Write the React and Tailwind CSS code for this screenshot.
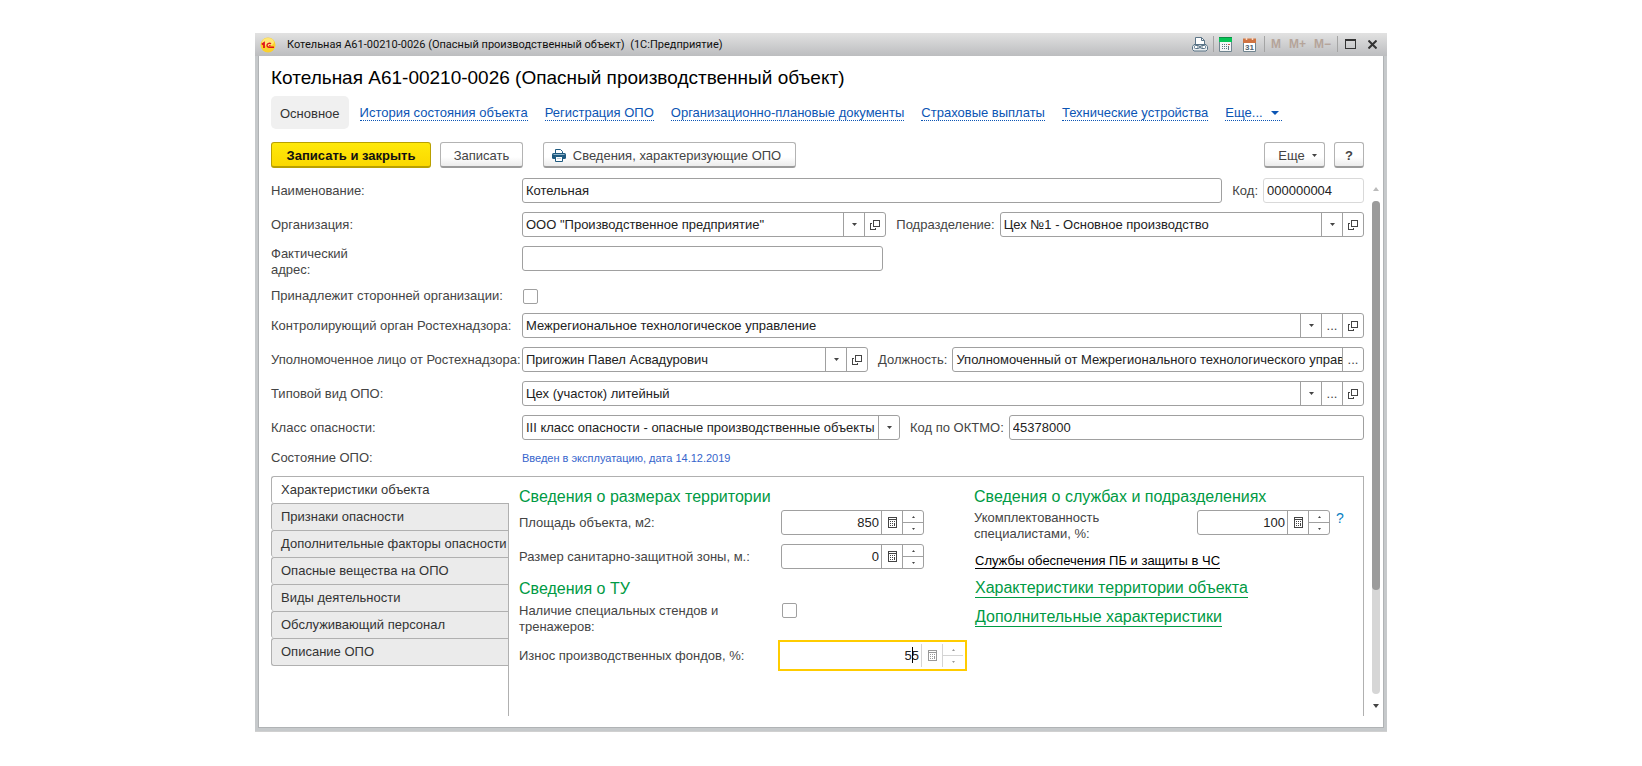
import { useState } from 'react';
import clsx from 'clsx';

const links = [
  'История состояния объекта',
  'Регистрация ОПО',
  'Организационно-плановые документы',
  'Страховые выплаты',
  'Технические устройства',
];

const tabs = [
  'Характеристики объекта',
  'Признаки опасности',
  'Дополнительные факторы опасности',
  'Опасные вещества на ОПО',
  'Виды деятельности',
  'Обслуживающий персонал',
  'Описание ОПО',
];

const Arrow = ({ className = 'w-[5px] h-[3px]', up }) => (
  <svg viewBox="0 0 6 3" className={className} preserveAspectRatio="none" aria-hidden="true">
    <path d={up ? 'M0 3h6L3 0z' : 'M0 0h6L3 3z'} fill="currentColor" />
  </svg>
);

const OpenIcon = () => (
  <svg width="10" height="10" viewBox="0 0 10 10" fill="none" stroke="currentColor" shapeRendering="crispEdges" aria-hidden="true">
    <path d="M3.5 0.5h6v6h-6z M2 3.5H0.5v6h5V8" />
  </svg>
);

const CalcIcon = () => (
  <svg width="9" height="11" viewBox="0 0 9 11" fill="none" stroke="currentColor" shapeRendering="crispEdges" aria-hidden="true">
    <path d="M0.5 0.5h8v10h-8z M0 2.5h9" />
    <path d="M2 4.5h5M2 6.5h5M2 8.5h3" strokeDasharray="1 1" />
    <path d="M6.5 6v3" />
  </svg>
);

const PrinterIcon = () => (
  <svg width="14" height="13" viewBox="0 0 14 13" fill="none" aria-hidden="true">
    <path d="M3.5 4V0.5h5l2 2V4" fill="#fff" stroke="#1f5a80" />
    <rect y="4" width="14" height="6" rx="1.5" fill="#1f5a80" />
    <path d="M1.5 5.5h11" stroke="#8fb4cb" />
    <path d="M3.5 7.5h7v5h-7z" fill="#fff" stroke="#1f5a80" />
    <path d="M5 9.5h4" stroke="#bcd0dc" />
  </svg>
);

const LogoIcon = () => (
  <svg width="16" height="16" viewBox="0 0 16 16" fill="none" aria-hidden="true">
    <circle cx="8" cy="8" r="7.5" fill="#fbd12c" />
    <ellipse cx="8" cy="5" rx="6" ry="4" fill="#ffe778" />
    <path d="M1.8 7.4L4 5.9v5" stroke="#e0131b" strokeWidth="1.8" />
    <path d="M11 6.8A2.4 2 0 1 0 9.2 10.3H14" stroke="#e0131b" strokeWidth="1.4" />
    <path d="M9.2 8.5H10.5" stroke="#e0131b" />
  </svg>
);

const TitlePrinterIcon = () => (
  <svg width="16" height="15" viewBox="0 0 16 15" fill="none" stroke="#5b7487" aria-hidden="true">
    <path d="M3.5 7V0.5h6l3 3V7" fill="#fff" />
    <path d="M9.5 0.5v3h3" />
    <path d="M2 7.5h12l1.5 2v3l-1.5 1.5H2L0.5 12.5v-3z" fill="#e9edf0" />
    <rect x="2.5" y="8.5" width="5" height="3" rx="1" fill="#fff" />
    <rect x="8.5" y="8.5" width="5" height="3" rx="1" fill="#fff" />
    <path d="M5 10h6" />
  </svg>
);

const TitleCalcIcon = () => (
  <svg width="13" height="15" viewBox="0 0 13 15" fill="none" aria-hidden="true">
    <path d="M0.5 0.5h12v14h-12z" fill="#f4f6f7" stroke="#70848f" />
    <path d="M0 0h13v5H0z" fill="#05c455" />
    <path d="M0 0.5h13" stroke="#0a8f43" />
    <path d="M3 7.5h5M3 9.5h5M3 11.5h5" stroke="#5d7482" strokeDasharray="1 1" />
    <path d="M9 7.5h2" stroke="#d05a4a" />
    <path d="M9.5 9v4" stroke="#5d7482" />
  </svg>
);

const TitleCalendarIcon = () => (
  <svg width="13" height="15" viewBox="0 0 13 15" fill="none" aria-hidden="true">
    <path d="M0.5 2.5h12v12h-12z" fill="#fff" stroke="#70848f" />
    <path d="M0 1.5h13V6H0z" fill="#cf7442" />
    <path d="M3.5 0v3M9.5 0v3" stroke="#f7d9c6" strokeWidth="1.5" />
    <text x="6.5" y="13" textAnchor="middle" fontSize="8" fontWeight="bold" fontFamily="Liberation Sans, sans-serif" fill="#4d5f6c">31</text>
  </svg>
);

const sideButton = 'flex w-[21px] shrink-0 items-center justify-center border-l border-[#a0a0a0]';
const titleDivider = 'h-4 w-px bg-[#a4a4a4]';
const toolButton = 'flex h-[26px] items-center justify-center rounded-[3px] border border-[#b3b3b3] border-b-2 border-b-[#9b9b9b] bg-linear-to-b from-white from-60% to-[#ececec] pt-[2px] text-[#444]';

const Field = ({ id, value, buttons = [], className, muted }) => (
  <div
    className={clsx(
      'flex h-[25px] min-w-0 overflow-hidden rounded-[3px] border bg-white',
      muted ? 'border-[#d9d9d9]' : 'border-[#a0a0a0]',
      className,
    )}
  >
    <input id={id} defaultValue={value} className="min-w-0 flex-1 pl-[3px] text-[#222] outline-none" />
    {buttons.includes('list') && (
      <button aria-label="Выбрать из списка" className={sideButton}><Arrow /></button>
    )}
    {buttons.includes('more') && (
      <button aria-label="Показать все" className={sideButton}>...</button>
    )}
    {buttons.includes('open') && (
      <button aria-label="Открыть" className={sideButton}><OpenIcon /></button>
    )}
  </div>
);

const NumberField = ({ id, value, className }) => (
  <div className={clsx('flex h-[25px] shrink-0 overflow-hidden rounded-[3px] border border-[#a0a0a0]', className)}>
    <input id={id} inputMode="numeric" defaultValue={value} className="min-w-0 flex-1 pr-[2px] text-right text-[#222] outline-none" />
    <button aria-label="Калькулятор" className={sideButton}><CalcIcon /></button>
    <div className="flex w-[21px] shrink-0 flex-col border-l border-[#a0a0a0]">
      <button aria-label="Увеличить" className="flex flex-1 items-center justify-center"><Arrow up className="h-[2px] w-[3px]" /></button>
      <button aria-label="Уменьшить" className="flex flex-1 items-center justify-center border-t border-[#a0a0a0]"><Arrow className="h-[2px] w-[3px]" /></button>
    </div>
  </div>
);

const Row = ({ id, label, children }) => (
  <div className="flex items-center">
    <label htmlFor={id} className="w-[251px] shrink-0 whitespace-nowrap">{label}</label>
    {children}
  </div>
);

const SideLabel = ({ id, children }) => (
  <label htmlFor={id} className="shrink-0 pr-[5px] pl-[10px] whitespace-nowrap">{children}</label>
);

const TitleBar = () => (
  <header className="flex h-[23px] items-center bg-linear-to-b from-[#e2e2e2] to-[#bcbdbf] pr-[10px] pl-[5px] text-[#111]">
    <LogoIcon />
    <span className="ml-[11px] flex-1 font-['Roboto',sans-serif] text-[11px] whitespace-pre">
      {'Котельная А61-00210-0026 (Опасный производственный объект)  (1С:Предприятие)'}
    </span>
    <div className="flex items-center pb-px">
      <button aria-label="Печать"><TitlePrinterIcon /></button>
      <span className={clsx(titleDivider, 'mx-[5px]')} />
      <button aria-label="Калькулятор"><TitleCalcIcon /></button>
      <button aria-label="Календарь" className="ml-[11px]"><TitleCalendarIcon /></button>
      <span className={clsx(titleDivider, 'ml-2')} />
      <div className="flex gap-2 px-[6px] text-[12px] font-bold text-[#b5a49a]">
        <button>M</button>
        <button>M+</button>
        <button>M−</button>
      </div>
      <span className={titleDivider} />
      <button aria-label="Развернуть" className="ml-[7px] h-[10px] w-[11px] border border-t-2 border-[#333]" />
      <button aria-label="Закрыть" className="ml-3">
        <svg width="9" height="9" viewBox="0 0 9 9" stroke="#333" strokeWidth="2" aria-hidden="true">
          <path d="M0.5 0.5l8 8M8.5 0.5l-8 8" />
        </svg>
      </button>
    </div>
  </header>
);

const NavBar = () => (
  <nav className="mt-[7px] flex h-[33px] items-center">
    <span className="flex h-full items-center rounded-[5px] bg-[#f0f0f0] px-[9px] pt-[2px] text-[#333]">Основное</span>
    <div className="ml-[11px] flex gap-[17px] pt-[2px] text-[#0b55b4]">
      {links.map((link) => (
        <a key={link} href="#" className="border-b border-dotted border-[#0b55b4] leading-[14px] whitespace-nowrap">{link}</a>
      ))}
      <a href="#" className="flex items-center gap-2 border-b border-dotted border-[#0b55b4] pr-[3px] leading-[14px]">
        Еще...
        <Arrow className="h-[4px] w-[8px]" />
      </a>
    </div>
  </nav>
);

const Toolbar = () => (
  <div className="mt-[13px] flex">
    <button className="h-[26px] w-[160px] rounded-[3px] border border-b-2 border-[#b9a000] bg-linear-to-b from-[#ffe90a] to-[#fbd800] pt-[2px] font-bold text-[#111]">
      Записать и закрыть
    </button>
    <button className={clsx(toolButton, 'ml-[9px] w-[83px]')}>Записать</button>
    <button className={clsx(toolButton, 'ml-5 w-[253px] gap-[7px] pr-[6px]')}>
      <PrinterIcon />
      Сведения, характеризующие ОПО
    </button>
    <button className={clsx(toolButton, 'ml-auto w-[61px] gap-[7px] pl-[6px]')}>
      Еще
      <Arrow />
    </button>
    <button className={clsx(toolButton, 'ml-[9px] w-[30px] font-bold')}>?</button>
  </div>
);

const sectionTitle = 'text-[16px] leading-5 text-[#009a44]';
const sectionLink = 'border-b border-[#009a44] text-[16px] leading-[18px] text-[#009a44]';
const checkbox = 'h-[15px] w-[15px] appearance-none rounded-[2px] border border-[#a0a0a0]';

const ObjectDetails = () => (
  <div className="flex flex-1 border-t border-r border-[#b0b0b0] pt-[10px] pl-[10px]">
    <section className="w-[455px]">
      <h2 className={sectionTitle}>Сведения о размерах территории</h2>
      <div className="mt-[3px] flex items-center">
        <label htmlFor="area" className="w-[262px]">Площадь объекта, м2:</label>
        <NumberField id="area" value="850" className="w-[143px]" />
      </div>
      <div className="mt-[9px] flex items-center">
        <label htmlFor="zone" className="w-[262px]">Размер санитарно-защитной зоны, м.:</label>
        <NumberField id="zone" value="0" className="w-[143px]" />
      </div>
      <h2 className={clsx(sectionTitle, 'mt-[10px]')}>Сведения о ТУ</h2>
      <div className="mt-1 flex items-start">
        <label htmlFor="stands" className="w-[263px] pr-14 leading-4">Наличие специальных стендов и тренажеров:</label>
        <input id="stands" type="checkbox" className={checkbox} />
      </div>
      <div className="mt-[5px] flex items-center">
        <label htmlFor="wear" className="w-[259px]">Износ производственных фондов, %:</label>
        <div className="relative flex h-[31px] w-[189px] border-2 border-[#ffcc00] py-[2px] pr-[2px]">
          <input id="wear" inputMode="numeric" defaultValue="55" className="min-w-0 flex-1 pr-[2px] text-right text-[#222] outline-none" />
          <span className="absolute top-[5px] right-[52px] h-[16px] w-px bg-black" />
          <button aria-label="Калькулятор" className="flex w-[21px] items-center justify-center border-l border-[#d4d4d4] text-[#999]"><CalcIcon /></button>
          <div className="flex w-[21px] flex-col border-l border-[#d4d4d4] text-[#999]">
            <button aria-label="Увеличить" className="flex flex-1 items-center justify-center"><Arrow up className="h-[2px] w-[3px]" /></button>
            <button aria-label="Уменьшить" className="flex flex-1 items-center justify-center border-t border-[#d4d4d4]"><Arrow className="h-[2px] w-[3px]" /></button>
          </div>
        </div>
      </div>
    </section>

    <section className="flex-1">
      <h2 className={sectionTitle}>Сведения о службах и подразделениях</h2>
      <div className="mt-[3px] flex items-start">
        <label htmlFor="staff" className="w-[223px] pr-16 leading-4">Укомплектованность специалистами, %:</label>
        <NumberField id="staff" value="100" className="w-[133px]" />
        <button className="ml-[6px] text-[14px] leading-4 text-[#0a7fc2]">?</button>
      </div>
      <div className="mt-[11px] flex flex-col items-start gap-[10px] pl-px">
        <a href="#" className="border-b border-black leading-[15px] text-black">Службы обеспечения ПБ и защиты в ЧС</a>
        <a href="#" className={sectionLink}>Характеристики территории объекта</a>
        <a href="#" className={sectionLink}>Дополнительные характеристики</a>
      </div>
    </section>
  </div>
);

const ScrollBar = () => (
  <div className="ml-2 flex w-2 flex-col items-center pt-[9px] pb-[8px]" aria-hidden="true">
    <Arrow up className="h-[4px] w-[6px] text-[#bbb]" />
    <div className="mt-[10px] w-2 flex-1 rounded-full bg-[#d6d6d6]">
      <div className="h-[79%] rounded-full bg-[#9b9b9b]" />
    </div>
    <Arrow className="mt-[10px] h-[4px] w-[6px] text-[#444]" />
  </div>
);

const App = () => {
  const [activeTab, setActiveTab] = useState(0);

  return (
    <div className="min-h-screen bg-white pt-[33px] pb-[34px] font-['Liberation_Sans',Arial,sans-serif] text-[13px] leading-4 text-[#444]">
      <main className="mx-auto w-full max-w-[1132px] border-b border-[#d0d0d0] bg-[#c6c9cb]">
        <TitleBar />
        <div className="mx-[3px] border border-t-0 border-[#b0b3b5] bg-white pt-[11px] pr-[3px] pb-[11px] pl-3">
          <h1 className="text-[19px] leading-[22px] text-black">Котельная А61-00210-0026 (Опасный производственный объект)</h1>
          <div className="pr-[16px]">
            <NavBar />
            <Toolbar />
          </div>

          <div className="mt-[10px] flex">
            <div className="min-w-0 flex-1">
              <div className="flex flex-col gap-[9px]">
                <Row id="name" label="Наименование:">
                  <Field id="name" value="Котельная" className="flex-1" />
                  <SideLabel id="code">Код:</SideLabel>
                  <Field id="code" value="000000004" className="w-[101px]" muted />
                </Row>
                <Row id="org" label="Организация:">
                  <Field id="org" value={'ООО "Производственное предприятие"'} buttons={['list', 'open']} className="flex-1" />
                  <SideLabel id="dept">Подразделение:</SideLabel>
                  <Field id="dept" value="Цех №1 - Основное производство" buttons={['list', 'open']} className="flex-1" />
                </Row>
                <div className="flex items-start">
                  <label htmlFor="address" className="w-[251px] pr-40 leading-4">Фактический адрес:</label>
                  <Field id="address" value="" className="w-[361px]" />
                </div>
              </div>
              <div className="mt-[10px] mb-[9px]">
                <Row id="foreign" label="Принадлежит сторонней организации:">
                  <input id="foreign" type="checkbox" className={clsx(checkbox, 'ml-px')} />
                </Row>
              </div>
              <div className="flex flex-col gap-[9px]">
                <Row id="authority" label="Контролирующий орган Ростехнадзора:">
                  <Field id="authority" value="Межрегиональное технологическое управление" buttons={['list', 'more', 'open']} className="flex-1" />
                </Row>
                <Row id="person" label="Уполномоченное лицо от Ростехнадзора:">
                  <Field id="person" value="Пригожин Павел Асвадурович" buttons={['list', 'open']} className="w-[346px]" />
                  <SideLabel id="position">Должность:</SideLabel>
                  <Field id="position" value="Уполномоченный от Межрегионального технологического управления" buttons={['more']} className="flex-1" />
                </Row>
                <Row id="kind" label="Типовой вид ОПО:">
                  <Field id="kind" value="Цех (участок) литейный" buttons={['list', 'more', 'open']} className="flex-1" />
                </Row>
                <Row id="hazard" label="Класс опасности:">
                  <div className="relative flex h-[25px] w-[378px] rounded-[3px] border border-[#a0a0a0]">
                    <select id="hazard" className="w-full appearance-none pr-[21px] pl-[3px] text-[#222] outline-none">
                      <option>III класс опасности - опасные производственные объекты средней опасности</option>
                    </select>
                    <span className="pointer-events-none absolute inset-y-0 right-0 flex w-[21px] items-center justify-center border-l border-[#a0a0a0]"><Arrow /></span>
                  </div>
                  <SideLabel id="oktmo">Код по ОКТМО:</SideLabel>
                  <Field id="oktmo" value="45378000" className="flex-1" />
                </Row>
              </div>
              <div className="mt-[10px] flex items-center">
                <span className="w-[251px]">Состояние ОПО:</span>
                <a href="#" className="text-[11px] text-[#3665cc]">Введен в эксплуатацию, дата 14.12.2019</a>
              </div>

              <div className="mt-[10px] flex h-[240px]">
                <div className="flex w-[238px] flex-col border-r border-[#b0b0b0]" role="tablist" aria-orientation="vertical">
                  {tabs.map((tab, i) => (
                    <button
                      key={tab}
                      role="tab"
                      aria-selected={i === activeTab}
                      onClick={() => setActiveTab(i)}
                      className={clsx(
                        'h-[27px] rounded-l-[3px] border-t border-l border-[#b0b0b0] pl-[9px] text-left whitespace-nowrap text-[#333] last:h-[28px] last:border-b',
                        i === activeTab ? '-mr-px bg-white' : 'bg-[#ebebeb]',
                      )}
                    >
                      {tab}
                    </button>
                  ))}
                </div>
                <ObjectDetails />
              </div>
            </div>
            <ScrollBar />
          </div>
        </div>
        <div className="h-[3px]" />
      </main>
    </div>
  );
};

export default App;
